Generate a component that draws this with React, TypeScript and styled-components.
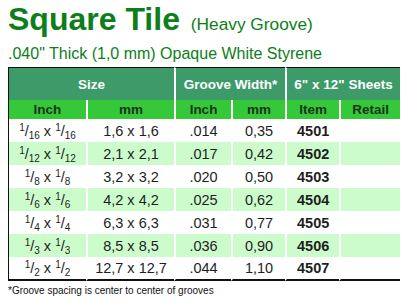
import styled, { createGlobalStyle } from 'styled-components'

const GlobalStyle = createGlobalStyle`
  body {
    margin: 0;
    background: #fff;
    font-family: "Liberation Sans", Arial, sans-serif;
  }
`

const Page = styled.div`
  padding: 1px 8px 0;
  width: 392px;
`

const Title = styled.h1`
  margin: 0;
  font-size: 32px;
  line-height: 36px;
  font-weight: 700;
  color: #0c7e1a;
  white-space: nowrap;
`

const TitleNote = styled.span`
  font-size: 17.3px;
  font-weight: 400;
  margin-left: 2px;
`

const Subtitle = styled.p`
  margin: 2px 0 0;
  font-size: 16px;
  line-height: 20px;
  color: #0c7e1a;
  white-space: nowrap;
`

const Table = styled.table`
  margin-top: 3px;
  width: 392px;
  table-layout: fixed;
  border-collapse: separate;
  border-spacing: 0;
`

const GroupHead = styled.th<{ $first?: boolean }>`
  height: 32px;
  padding: 0;
  background: #3d9a69;
  color: #fff;
  font-size: 13.5px;
  font-weight: 700;
  text-align: center;
  border-top: 1px solid #111;
  border-left: ${p => (p.$first ? '1px solid #111' : '2px solid #fff')};
`

const SubHead = styled.th<{ $first?: boolean }>`
  height: 19px;
  padding: 0;
  background: #35c93a;
  color: #1b331b;
  font-size: 13.5px;
  font-weight: 700;
  text-align: center;
  border-left: ${p => (p.$first ? '1px solid #111' : '2px solid #fff')};
`

const Row = styled.tr<{ $shaded: boolean; $last: boolean }>`
  height: ${p => (p.$last ? 24 : 23)}px;
  background: ${p => (p.$shaded ? '#ccfccc' : '#fff')};

  td {
    border-bottom: ${p => (p.$last ? '2px solid #111' : 'none')};
  }
`

const Cell = styled.td<{ $first?: boolean; $bold?: boolean; $align?: string }>`
  padding: 0;
  font-size: 14.5px;
  color: #1e1e1e;
  font-weight: ${p => (p.$bold ? 700 : 400)};
  text-align: ${p => p.$align ?? 'center'};
  padding-left: ${p => (p.$align === 'left' ? '10px' : '0')};
  border-left: ${p => (p.$first ? '1px solid #111' : '2px solid #fff')};
  white-space: nowrap;
`

const Sup = styled.sup`
  font-size: 10px;
  vertical-align: 5px;
  line-height: 0;
`

const Sub = styled.sub`
  font-size: 10px;
  vertical-align: -3px;
  line-height: 0;
`

const Footnote = styled.p`
  margin: 4px 0 0;
  font-size: 10px;
  color: #111;
`

interface TileRow {
  den: string
  mm: string
  inch: string
  gmm: string
  item: string
}

const rows: TileRow[] = [
  { den: '16', mm: '1,6 x 1,6', inch: '.014', gmm: '0,35', item: '4501' },
  { den: '12', mm: '2,1 x 2,1', inch: '.017', gmm: '0,42', item: '4502' },
  { den: '8', mm: '3,2 x 3,2', inch: '.020', gmm: '0,50', item: '4503' },
  { den: '6', mm: '4,2 x 4,2', inch: '.025', gmm: '0,62', item: '4504' },
  { den: '4', mm: '6,3 x 6,3', inch: '.031', gmm: '0,77', item: '4505' },
  { den: '3', mm: '8,5 x 8,5', inch: '.036', gmm: '0,90', item: '4506' },
  { den: '2', mm: '12,7 x 12,7', inch: '.044', gmm: '1,10', item: '4507' },
]

function Frac({ den }: { den: string }) {
  return (
    <>
      <Sup>1</Sup>/<Sub>{den}</Sub>
    </>
  )
}

function App() {
  return (
    <Page>
      <GlobalStyle />
      <Title>
        Square Tile <TitleNote>(Heavy Groove)</TitleNote>
      </Title>
      <Subtitle>.040" Thick (1,0 mm) Opaque White Styrene</Subtitle>
      <Table>
        <colgroup>
          <col style={{ width: 78 }} />
          <col style={{ width: 88 }} />
          <col style={{ width: 57 }} />
          <col style={{ width: 54 }} />
          <col style={{ width: 54 }} />
          <col style={{ width: 61 }} />
        </colgroup>
        <thead>
          <tr>
            <GroupHead $first colSpan={2}>Size</GroupHead>
            <GroupHead colSpan={2}>Groove Width*</GroupHead>
            <GroupHead colSpan={2}>6" x 12" Sheets</GroupHead>
          </tr>
          <tr>
            <SubHead $first>Inch</SubHead>
            <SubHead>mm</SubHead>
            <SubHead>Inch</SubHead>
            <SubHead>mm</SubHead>
            <SubHead>Item</SubHead>
            <SubHead>Retail</SubHead>
          </tr>
        </thead>
        <tbody>
          {rows.map((r, i) => (
            <Row key={r.item} $shaded={i % 2 === 1} $last={i === rows.length - 1}>
              <Cell $first>
                <Frac den={r.den} /> x <Frac den={r.den} />
              </Cell>
              <Cell>{r.mm}</Cell>
              <Cell>{r.inch}</Cell>
              <Cell>{r.gmm}</Cell>
              <Cell $bold $align="left">{r.item}</Cell>
              <Cell />
            </Row>
          ))}
        </tbody>
      </Table>
      <Footnote>*Groove spacing is center to center of grooves</Footnote>
    </Page>
  )
}

export default App
